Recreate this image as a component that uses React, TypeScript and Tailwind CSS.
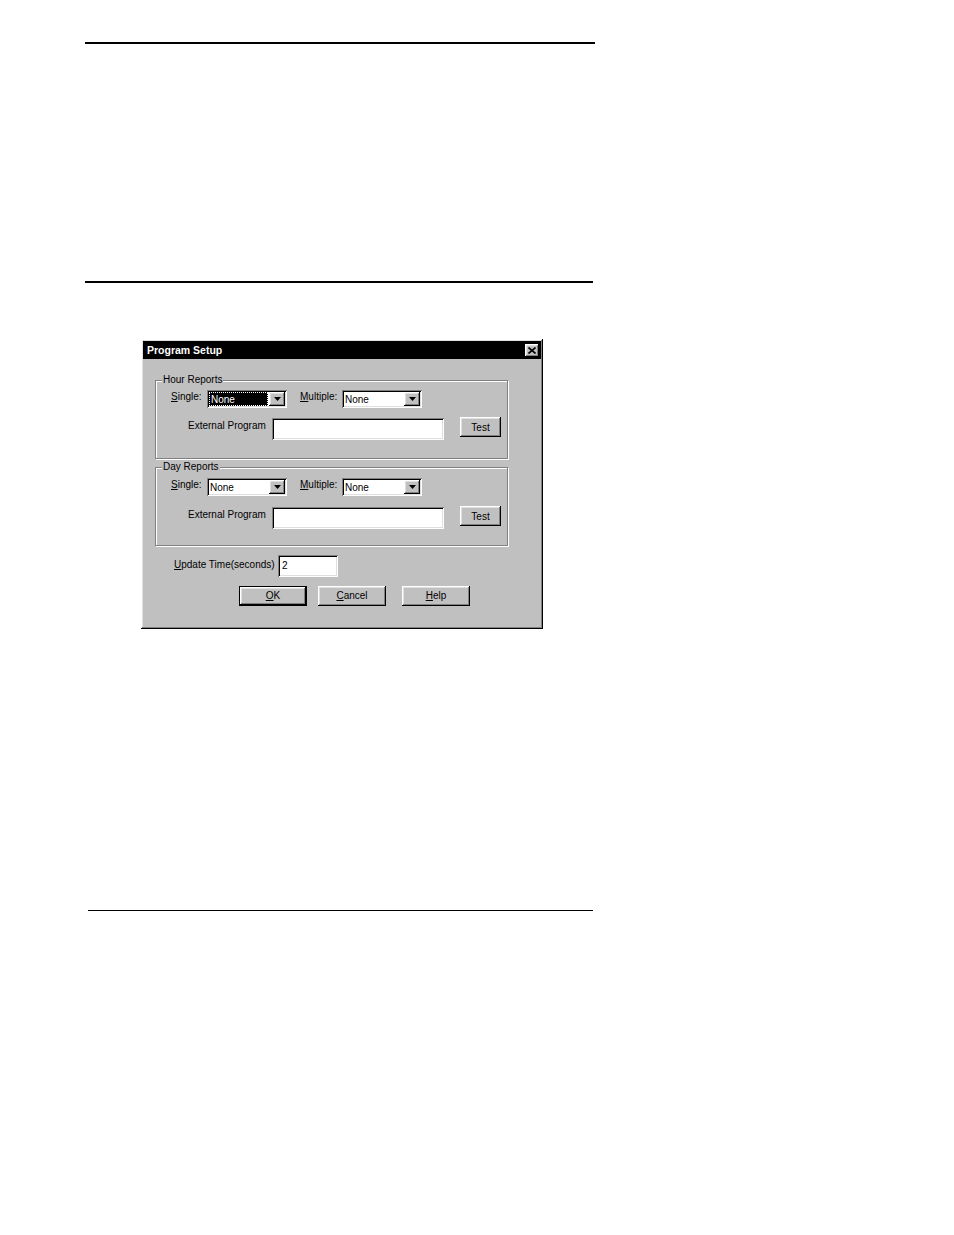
import React from "react";

const raised =
  "shadow-[inset_-1px_-1px_#000,inset_1px_1px_#fff,inset_-2px_-2px_#808080,inset_2px_2px_#dfdfdf]";
const sunken =
  "shadow-[inset_1px_1px_#808080,inset_-1px_-1px_#fff,inset_2px_2px_#000,inset_-2px_-2px_#dfdfdf]";

function Select({ focused }: { focused?: boolean }) {
  return (
    <div className={`w-[80px] h-[18px] bg-white ${sunken} flex items-center p-[2px]`}>
      <div className="flex-1 h-full flex items-center pr-[1px]">
        {focused ? (
          <span className="h-full flex-1 flex items-center bg-black text-white border border-dotted border-white pl-[1px] pt-[1px] leading-none">
            None
          </span>
        ) : (
          <span className="pl-[1px] pt-[1px] leading-none">None</span>
        )}
      </div>
      <div className={`w-[16px] h-[14px] bg-[#c0c0c0] ${raised} flex items-center justify-center`}>
        <svg width="7" height="4" viewBox="0 0 7 4">
          <path d="M0 0h7L3.5 4z" fill="#000" />
        </svg>
      </div>
    </div>
  );
}

function Button({
  children,
  w,
  def,
}: {
  children: React.ReactNode;
  w: string;
  def?: boolean;
}) {
  return (
    <div
      className={`${w} h-[20px] bg-[#c0c0c0] ${
        def ? "border border-black" : ""
      } flex`}
    >
      <div className={`flex-1 ${raised} flex items-center justify-center leading-none`}>
        {children}
      </div>
    </div>
  );
}

function Group({
  label,
  selTop,
  inputTop,
}: {
  label: string;
  selTop: string;
  inputTop: string;
}) {
  return (
    <div className="relative w-[353px] h-[79px] border border-[#808080] shadow-[1px_1px_0_#fff,inset_1px_1px_0_#fff]">
      <span className="absolute -top-[7px] left-[6px] px-[1px] bg-[#c0c0c0] leading-[12px]">
        {label}
      </span>
      <div className={`${selTop} flex items-start h-[18px] pl-[15px] leading-[12px]`}>
        <span className="w-[36px] mt-[1px]">
          <u>S</u>ingle:
        </span>
        <Select focused={label === "Hour Reports"} />
        <span className="ml-[13px] w-[42px] mt-[1px]">
          <u>M</u>ultiple:
        </span>
        <Select />
      </div>
      <div className={`${inputTop} flex items-start h-[22px] pl-[32px] leading-[12px]`}>
        <span className="w-[84px] mt-[2px]">External Program</span>
        <div className={`w-[172px] h-[22px] bg-white ${sunken}`} />
        <div className="ml-[16px] -mt-[1px]">
          <Button w="w-[41px]">
            <span className="pt-[1px]">Test</span>
          </Button>
        </div>
      </div>
    </div>
  );
}

export default function App() {
  return (
    <div
      className="w-[954px] h-[1235px] bg-white overflow-hidden pt-[42px] text-[10px] text-black"
      style={{ fontFamily: '"Liberation Sans", Arial, sans-serif' }}
    >
      <div className="ml-[85px] w-[510px] h-[2px] bg-black" />
      <div className="ml-[85px] mt-[237px] w-[508px] h-[2px] bg-black" />

      <div
        className={`ml-[141px] mt-[56px] w-[402px] h-[290px] bg-[#c0c0c0] p-[2px] ${raised}`}
      >
        <div className="h-[18px] bg-black flex items-center justify-between pl-[4px] pr-[2px]">
          <span className="text-white font-bold text-[10.5px] leading-none">
            Program Setup
          </span>
          <div className={`w-[14px] h-[13px] bg-[#c0c0c0] ${raised} flex items-center justify-center`}>
            <svg width="8" height="7" viewBox="0 0 8 7">
              <path d="M0.5 0.5L7.5 6.5M7.5 0.5L0.5 6.5" stroke="#000" strokeWidth="1.6" />
            </svg>
          </div>
        </div>

        <div className="pl-[12px] pt-[21px]">
          <Group label="Hour Reports" selTop="mt-[9px]" inputTop="mt-[10px]" />
          <div className="mt-[8px]">
            <Group label="Day Reports" selTop="mt-[10px]" inputTop="mt-[11px]" />
          </div>

          <div className="mt-[9px] flex items-start h-[22px] pl-[19px] leading-[12px]">
            <span className="w-[104px] mt-[4px]">
              <u>U</u>pdate Time(seconds)
            </span>
            <div className={`w-[60px] h-[22px] bg-white ${sunken} flex items-center pl-[4px]`}>
              2
            </div>
          </div>

          <div className="mt-[9px] flex pl-[84px]">
            <Button w="w-[68px]" def>
              <u>O</u>K
            </Button>
            <div className="ml-[11px]">
              <Button w="w-[68px]">
                <u>C</u>ancel
              </Button>
            </div>
            <div className="ml-[16px]">
              <Button w="w-[68px]">
                <u>H</u>elp
              </Button>
            </div>
          </div>
        </div>
      </div>

      <div className="ml-[88px] mt-[281px] w-[505px] h-[1px] bg-black" />
    </div>
  );
}
